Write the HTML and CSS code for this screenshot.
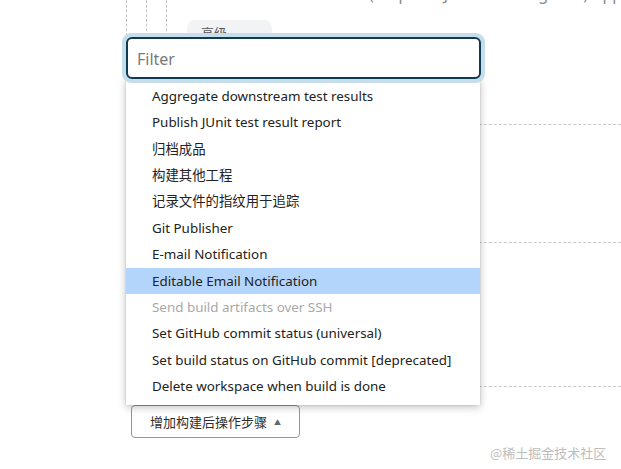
FILE: index.html
```html
<!DOCTYPE html>
<html lang="zh">
<head>
<meta charset="utf-8">
<link rel="stylesheet" href="styles.css">
</head>
<body>
<div class="page">
  <div class="top-row">
    <div class="guides">
      <span class="guide"></span>
      <span class="guide"></span>
      <span class="guide"></span>
    </div>
    <div class="top-main">
      <div class="cut-text">(Requires Jenkins configured) Apply</div>
      <span class="adv-btn">高级...</span>
    </div>
  </div>
  <div class="sep sep1"></div>
  <div class="sep sep2"></div>
  <div class="sep sep3"></div>
  <div class="btn-row">
    <button class="add-btn">增加构建后操作步骤 <span class="caret">▲</span></button>
  </div>
  <div class="watermark">@稀土掘金技术社区</div>

  <div class="dropdown">
    <div class="filter-ring">
      <div class="filter">Filter</div>
    </div>
    <ul class="menu">
      <li>Aggregate downstream test results</li>
      <li>Publish JUnit test result report</li>
      <li>归档成品</li>
      <li>构建其他工程</li>
      <li>记录文件的指纹用于追踪</li>
      <li>Git Publisher</li>
      <li>E-mail Notification</li>
      <li class="active">Editable Email Notification</li>
      <li class="disabled">Send build artifacts over SSH</li>
      <li>Set GitHub commit status (universal)</li>
      <li>Set build status on GitHub commit [deprecated]</li>
      <li>Delete workspace when build is done</li>
    </ul>
  </div>
</div>
</body>
</html>
```

FILE: styles.css
```css
* { box-sizing: border-box; }
html, body { margin: 0; padding: 0; background: #fff; }
body {
  font-family: "Segoe UI", "Noto Sans", "Noto Sans CJK SC", sans-serif;
  color: #222;
  width: 621px;
  height: 469px;
  overflow: hidden;
}
.page {
  position: relative;
  width: 621px;
  height: 469px;
}
.top-row {
  display: flex;
  height: 40px;
}
.guides {
  display: flex;
  padding-left: 126px;
  gap: 19px;
  height: 36px;
}
.guide {
  width: 0;
  height: 36px;
  border-left: 1px dashed #c4c4c4;
}
.top-main {
  flex: 1;
  display: flex;
  flex-direction: column;
  padding-left: 20px;
}
.cut-text {
  margin-top: -16px;
  margin-left: 182px;
  font-size: 16px;
  color: #8a8a8a;
  height: 20px;
  line-height: 20px;
  white-space: nowrap;
}
.adv-btn {
  align-self: flex-start;
  margin-top: 16px;
  width: 85px;
  height: 22px;
  background: #f2f3f4;
  border-radius: 8px;
  font-family: "Noto Sans CJK SC", sans-serif;
  font-size: 13px;
  color: #555;
  padding-left: 14px;
  line-height: 26px;
}
.sep {
  margin-left: 300px;
  border-top: 1.5px dashed #c8c8c8;
  height: 0;
}
.sep1 { margin-top: 84px; }
.sep2 { margin-top: 117px; }
.sep3 { margin-top: 143px; }
.btn-row {
  padding-left: 131px;
  margin-top: 18px;
}
.add-btn {
  width: 169px;
  height: 33px;
  border: 1.5px solid #8e9a9a;
  border-radius: 4px;
  background: #fff;
  font-family: "Noto Sans CJK SC", sans-serif;
  font-size: 13px;
  color: #2e2e2e;
  padding: 0 0 0 18px;
  text-align: left;
  display: flex;
  align-items: center;
  gap: 2px;
}
.caret {
  font-size: 7px;
  color: #666;
  margin-left: 5px;
}
.watermark {
  margin-top: 5px;
  padding-left: 490px;
  font-family: "Noto Sans CJK SC", sans-serif;
  font-size: 13px;
  color: #bdbdbd;
}
.dropdown {
  position: absolute;
  left: 122px;
  top: 33px;
  width: 363px;
}
.filter-ring {
  padding: 4px;
  border-radius: 9px;
  background: #c6ddec;
  position: relative;
  z-index: 2;
}
.filter {
  height: 42px;
  border: 2px solid #0e3a52;
  border-radius: 6px;
  background: #fff;
  font-size: 16px;
  color: #7a7a7a;
  padding-left: 9px;
  line-height: 41px;
}
.menu {
  list-style: none;
  margin: -4px 0 0 4px;
  padding: 4px 0 6px;
  width: 354px;
  background: #fff;
  box-shadow: 0 2px 8px rgba(0,0,0,0.25), 0 0 2px rgba(0,0,0,0.15);
  position: relative;
  z-index: 1;
}
.menu li {
  height: 26.36px;
  line-height: 27px;
  padding-left: 26px;
  font-size: 13.4px;
  color: #222;
  white-space: nowrap;
}
.menu li.active { background: #b4d5fb; }
.menu li.disabled { color: #a9a9a9; }
```
